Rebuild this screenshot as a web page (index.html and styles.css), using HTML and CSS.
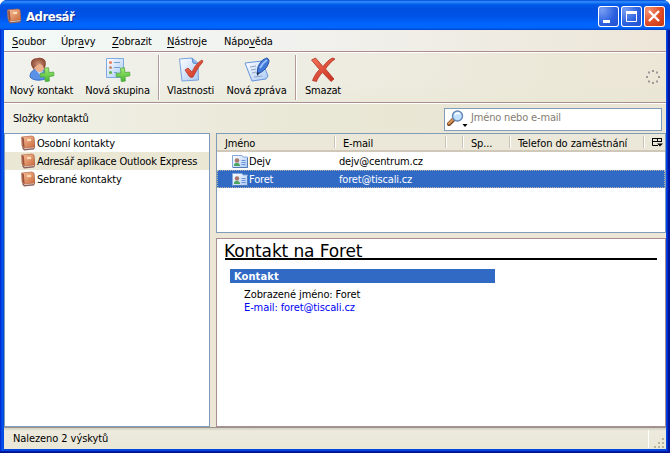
FILE: index.html
```html
<!DOCTYPE html>
<html lang="cs">
<head>
<meta charset="utf-8">
<title>Adresář</title>
<link rel="stylesheet" href="styles.css">
</head>
<body>
<svg class="defs" width="0" height="0" aria-hidden="true">
  <defs>
    <linearGradient id="cover" x2="1" y2="1"><stop stop-color="#fac39b"/><stop offset="1" stop-color="#c9683c"/></linearGradient>
    <linearGradient id="sheet" x2="1" y2="1"><stop stop-color="#fff"/><stop offset="1" stop-color="#a9c9f5"/></linearGradient>
    <linearGradient id="green" x2="0" y2="1"><stop stop-color="#a5eb75"/><stop offset="1" stop-color="#43b52e"/></linearGradient>
    <linearGradient id="red" x2="1" y2="1"><stop stop-color="#f57359"/><stop offset="1" stop-color="#c82c1d"/></linearGradient>
    <radialGradient id="hair"><stop stop-color="#cf9378"/><stop offset="1" stop-color="#8a4732"/></radialGradient>
    <symbol id="book" viewBox="0 0 16 16">
      <path d="M2 13l2 2.500 10-1 1-2-1-10-11 9z" fill="#8c625c"/>
      <path d="M3 12l10-1 1.500 2-10 1z" fill="#f2ece9"/>
      <path d="M1.500 2L12 1l2 1 .7 10L4 13l-2-2z" fill="url(#cover)" stroke="#b46a4a" stroke-width=".7"/>
      <path d="M2 2.500l1.800.3.800 10-2-1.600z" fill="#96523f"/>
      <path d="M7 4l4-.3.200 2.300-4 .3z" fill="#fddcb8"/>
    </symbol>
    <symbol id="card" viewBox="0 0 16 16">
      <path d="M.5 1.500H10l1 1.500h4.500v10.500H.5z" fill="url(#sheet)" stroke="#86a9dc"/>
      <path d="M1 13.500h14.500V4" fill="none" stroke="#557db9"/>
      <path d="M2 12c0-3 1.200-3 3-3s3 1 3 3z" fill="#4ba45c"/>
      <circle cx="5" cy="6.500" r="2.200" fill="#a87767"/>
      <path d="M9.500 6.500h4M9.500 8.500h4M9.500 10.500h4" stroke="#6a94d8"/>
    </symbol>
    <symbol id="plus" viewBox="0 0 15 15">
      <path d="M5 1.200l4-.5.500 4.800 4.700-.4.200 3.700-4.800.800.200 4.500-4 .5-.5-4.800-4.500.200-.2-3.700L5.400 6z" fill="url(#green)" stroke="#4fa743" stroke-width=".8"/>
    </symbol>
  </defs>
</svg>
<div class="window">
  <header class="titlebar">
    <svg class="app-icon" width="16" height="16"><use href="#book"/></svg>
    <h1 class="title">Adresář</h1>
    <div class="caption-buttons">
      <span class="cap"><svg width="21" height="21"><path d="M5 14h7v3H5z" fill="#fff"/></svg></span>
      <span class="cap"><svg width="21" height="21"><path d="M5.500 5.500h10v10h-10z" fill="none" stroke="#fff"/><path d="M5 6.500h11" stroke="#fff" stroke-width="3"/></svg></span>
      <span class="cap close"><svg width="21" height="21"><path d="M5 5l10 10M15 5L5 15" stroke="#fff" stroke-width="2.300"/></svg></span>
    </div>
  </header>
  <main class="client">
    <nav class="menubar">
      <span class="m1"><u>S</u>oubor</span><span class="m2">Úpr<u>a</u>vy</span><span class="m3"><u>Z</u>obrazit</span><span class="m4"><u>N</u>ástroje</span><span class="m5">Nápo<u>v</u>ěda</span>
    </nav>
    <div class="toolbar">
      <div class="tool w-contact">
        <svg width="26" height="26" viewBox="0 0 26 26">
          <path d="M1 20c0-5 3-8 9-8s8 3 8 9c-5 3-14 3-17-1z" fill="#5b92e8" stroke="#356bc4"/>
          <path d="M7 13l4 5 3-4z" fill="#c9e0ff"/>
          <ellipse cx="10.500" cy="9.500" rx="5" ry="5.500" fill="#eab18e"/>
          <path d="M3 10C0 4 4 1 9 1c6-1 9 3 7.500 8l-1.500 4c0-4-2-6-5-6-2 2-4 1-5 6z" fill="url(#hair)"/>
          <use href="#plus" x="10" y="10" width="16" height="15"/>
        </svg><span>Nový kontakt</span>
      </div>
      <div class="tool w-group">
        <svg width="26" height="26" viewBox="0 0 26 26">
          <path d="M1.500 1.500h17v19h-17z" fill="url(#sheet)" stroke="#7fa9e3"/>
          <circle cx="5.500" cy="5.500" r="1.500" fill="#ec7c60"/><circle cx="5.500" cy="10.500" r="1.500" fill="#c78a6c"/><circle cx="5.500" cy="15.500" r="1.500" fill="#65af48"/>
          <path d="M9 5.500h6M9 10.500h6M9 15.500h3" stroke="#729fda"/>
          <use href="#plus" x="10" y="10" width="16" height="15"/>
        </svg><span>Nová skupina</span>
      </div>
      <i class="sep"></i>
      <div class="tool w-props">
        <svg width="26" height="26" viewBox="0 0 26 26">
          <path d="M1.500 2L14 1l6 5 .5 17L4 24z" fill="url(#sheet)" stroke="#7aa3dc"/>
          <path d="M14 1l1 5 5 1" fill="#8ab6f0" stroke="#5c8ccc"/>
          <path d="M7 13l3-2 4 4c3-6 5-9 10-12 1 1 1 2 0 3-4 4-6 9-9 14-2 1-3 0-4-1z" fill="url(#red)" stroke="#b43829" stroke-width=".8"/>
        </svg><span>Vlastnosti</span>
      </div>
      <div class="tool w-message">
        <svg width="26" height="26" viewBox="0 0 26 26">
          <path d="M1 6l17-2 6 15-2 3-14 2z" fill="url(#sheet)" stroke="#6695dc"/>
          <path d="M6 10l6-1M7 13l5-1M8 16l4-1M10 20l8-1" stroke="#92a5c0"/>
          <path d="M13 17l1-7C16 5 19 2 23 1c2 1 2.500 3 1.500 5-1 4-4 7-7 9z" fill="#4079d8" stroke="#254da3"/>
          <path d="M16 11c2-4 4-6 7-8" stroke="#9bc1ff" stroke-width="1.800" fill="none"/>
          <path d="M13 19v-4l3 1z" fill="#263b5e"/>
        </svg><span>Nová zpráva</span>
      </div>
      <i class="sep"></i>
      <div class="tool w-delete">
        <svg width="26" height="26" viewBox="0 0 26 26">
          <path d="M1.500 3l4-2 7.500 8.500c3-4 6-7 9.500-8.500l2.500 1c-4 3-7 6-9.500 10l8.500 10-3 2.500-8.500-9c-3 3-5 6-6 9l-4-1c2-5 4-8 7-11z" fill="url(#red)" stroke="#ad3424" stroke-width=".8"/>
        </svg><span>Smazat</span>
      </div>
      <svg class="throbber" width="16" height="16" viewBox="0 0 16 16" fill="#999">
        <path d="M7 1h2v2H7zM11 2.500h2v2h-2zM13 7h2v2h-2zM11 11.500h2v2h-2zM7 13h2v2H7zM3 11.500h2v2H3zM1 7h2v2H1zM3 2.500h2v2H3z"/>
      </svg>
    </div>
    <div class="searchrow">
      <span class="folders-label">Složky kontaktů</span>
      <div class="search">
        <svg width="21" height="18" viewBox="0 0 21 18">
          <path d="M2 14l5-5" stroke="#704522" stroke-width="4" stroke-linecap="round"/>
          <path d="M2 13.500l5-5" stroke="#dc9658" stroke-width="2.300" stroke-linecap="round"/>
          <circle cx="10.500" cy="6" r="5" fill="#c2e1ff" stroke="#6688b5" stroke-width="1.500"/>
          <path d="M8 5c1-2 3-2.500 5-1" stroke="#fff" stroke-width="1.500" fill="none"/>
          <path d="M15.500 14h5L18 17z"/>
        </svg>
        <span>Jméno nebo e-mail</span>
      </div>
    </div>
    <div class="panes">
      <section class="tree">
        <div class="folder"><svg width="16" height="16"><use href="#book"/></svg><span>Osobní kontakty</span></div>
        <div class="folder current"><svg width="16" height="16"><use href="#book"/></svg><span>Adresář aplikace Outlook Express</span></div>
        <div class="folder"><svg width="16" height="16"><use href="#book"/></svg><span>Sebrané kontakty</span></div>
      </section>
      <div class="right">
        <section class="contacts">
          <div class="columns">
            <span>Jméno</span><span>E-mail</span><span></span><span>Sp...</span><span class="phone">Telefon do zaměstnání</span>
            <span class="picker"><svg width="11" height="11" viewBox="0 0 11 11"><path d="M.5 1.500h9M.5 4.500h9M.5 1v7.500H6M9.500 1v4M5.500 2v3" fill="none" stroke="#000"/><path d="M5 6.500h6L8 9.500z"/></svg></span>
          </div>
          <div class="contact"><svg width="16" height="16"><use href="#card"/></svg><span class="name">Dejv</span><span class="mail">dejv@centrum.cz</span></div>
          <div class="contact selected"><svg width="16" height="16"><use href="#card"/></svg><span class="name">Foret</span><span class="mail">foret@tiscali.cz</span></div>
        </section>
        <section class="detail">
          <h2>Kontakt na Foret</h2>
          <h3>Kontakt</h3>
          <p>Zobrazené jméno: Foret</p>
          <p class="link">E-mail: foret@tiscali.cz</p>
        </section>
      </div>
    </div>
    <footer class="status">
      <span>Nalezeno 2 výskytů</span>
      <svg class="grip" width="18" height="20" viewBox="0 0 18 20"><path d="M.5 1v18" stroke="#fff"/><path d="M14 9h2v2h-2zM10 13h2v2h-2zM14 13h2v2h-2zM6 17h2v2H6zM10 17h2v2h-2zM14 17h2v2h-2z" fill="#b8b49b"/></svg>
    </footer>
  </main>
</div>
</body>
</html>
```
FILE: styles.css
```css
* { box-sizing: border-box; }
body { margin: 0; background: #fff; font: 11px/13px "DejaVu Sans Condensed", "DejaVu Sans", sans-serif; font-stretch: condensed; color: #000; letter-spacing: -.17px; white-space: nowrap; }
.defs { display: block; height: 0; }
svg { display: block; flex: none; }
.window { width: 670px; height: 453px; display: flex; flex-direction: column; background: linear-gradient(90deg, #001fc9, #0055ec 2px, #0047df 4px, #0047df 666px, #0042ee 667px, #0019a5 668px, #00138c); box-shadow: inset 0 -1px #00138c, inset 0 -2px #0019a5; border-radius: 7px 7px 0 0; overflow: hidden; }
.titlebar { height: 30px; display: flex; align-items: center; padding: 1px 5px 0 6px; background: linear-gradient(#0049d8 0, #3893ff 2px, #1273f4 3px, #0058e8 5px, #0050e1 9px, #0054e7 17px, #0065ff 24px, #0065fb 28px, #003fc5 30px); }
.title { margin: 3px 0 0 4px; font: bold 13px/16px "DejaVu Sans Condensed", sans-serif; color: #fff; letter-spacing: -.5px; text-shadow: 1px 1px #0b2b8d; }
.caption-buttons { margin: 2px 0 0 auto; display: flex; gap: 2px; }
.cap { width: 21px; height: 21px; border-radius: 3px; background: radial-gradient(circle at 20% 20%, #789df2, #2b60df 55%, #1e4ccb); box-shadow: inset 0 0 0 1px #fff; }
.close { background: radial-gradient(circle at 20% 20%, #f39174, #de4b25 55%, #bd3411); }
.client { flex: 1; margin: 0 4px 4px; min-height: 0; display: flex; flex-direction: column; background: linear-gradient(100deg, #f1f2ed 0, #eeeee5 35%, #ece8d8 75%, #ebe5d5); }
.menubar { height: 22px; display: flex; align-items: center; padding: 1px 0 0 8px; border-bottom: 1px solid #ab8d8e; background: linear-gradient(90deg, #f2faf7, #f1f1ee 45%, #ede6d8); }
.menubar u { text-underline-offset: 2px; text-decoration-thickness: 1px; text-decoration-skip-ink: none; }
.m1 { width: 49px; } .m2 { width: 51px; } .m3 { width: 55px; } .m4 { width: 57px; }
.toolbar { height: 51px; display: flex; border-top: 1px solid #fff; border-bottom: 1px solid #ab8d8e; background: linear-gradient(transparent 60%, #e8e7d480); }
.tool { display: flex; flex-direction: column; align-items: center; padding-top: 4px; gap: 1px; }
.w-contact { width: 75px; } .w-group { width: 77px; } .w-props { width: 59px; } .w-message { width: 73px; } .w-delete { width: 50px; }
.sep { width: 2px; height: 45px; margin: 2px 1px 0 2px; border-left: 1px solid #b29a98; border-right: 1px solid #fff; }
.throbber { margin: 16px 5px 0 auto; }
.searchrow { height: 30px; display: flex; align-items: center; padding: 0 4px 0 9px; border-top: 1px solid #fff; background: linear-gradient(90deg, #f1f1e9, #e9e7d5 45%, #ebe5d5); }
.search { width: 218px; height: 23px; margin: 1px 0 0 auto; display: flex; align-items: center; gap: 3px; padding: 0 0 3px 2px; border: 1px solid #7f9db9; background: #fff; color: #857d72; }
.search svg { margin-top: 3px; }
.panes { height: 294px; display: flex; gap: 6px; background: #ebe6d6; }
.tree { width: 206px; background: #fff; border: 1px solid #7f9db9; }
.folder { height: 18px; display: flex; align-items: center; padding-left: 15px; gap: 1px; }
.current { background: #ebe7d5; }
.right { width: 450px; display: flex; flex-direction: column; gap: 5px; }
.contacts { height: 100px; background: #fff; border: 1px solid #7f9db9; }
.columns { height: 18px; display: grid; grid-template-columns: 118px 111px 17px 47px 134px 1fr; align-items: center; background: #ebe8d9; border-bottom: 2px solid #cfc7b8; }
.columns span { height: 12px; line-height: 15px; padding-left: 8px; border-right: 1px solid #c8c3b2; box-shadow: 1px 0 #fff; }
.columns .phone { letter-spacing: -.08px; }
.columns .picker { padding: 1px 0 0 8px; border: 0; box-shadow: none; }
.contact { height: 18px; display: flex; align-items: center; padding: 1px 0 0 15px; gap: 1px; }
.name { width: 89px; }
.selected { background: #316ac5; color: #fff; outline: 1px dotted #b9b5aa; outline-offset: -1px; }
.detail { height: 189px; background: #fff; border: 1px solid #aa8e91; padding: 5px 8px; }
.detail h2 { margin: 0; height: 16px; font: 17px/15px "DejaVu Sans", sans-serif; border-bottom: 2px solid #000; letter-spacing: -.13px; text-indent: -1px; }
.detail h3 { width: 265px; height: 14px; margin: 9px 0 5px 5px; padding-left: 4px; font: bold 11px/16px "DejaVu Sans Condensed", sans-serif; background: #316ac5; color: #fff; letter-spacing: .1px; }
.detail p { margin: 0 0 0 19px; letter-spacing: -.1px; }
.detail .link { color: #0000f5; }
.status { height: 22px; display: flex; align-items: center; justify-content: space-between; padding-left: 9px; border-top: 1px solid #99958a; background: linear-gradient(#d3cfc1, #edeade 3px, #e9e7d5); letter-spacing: -.08px; }
```
